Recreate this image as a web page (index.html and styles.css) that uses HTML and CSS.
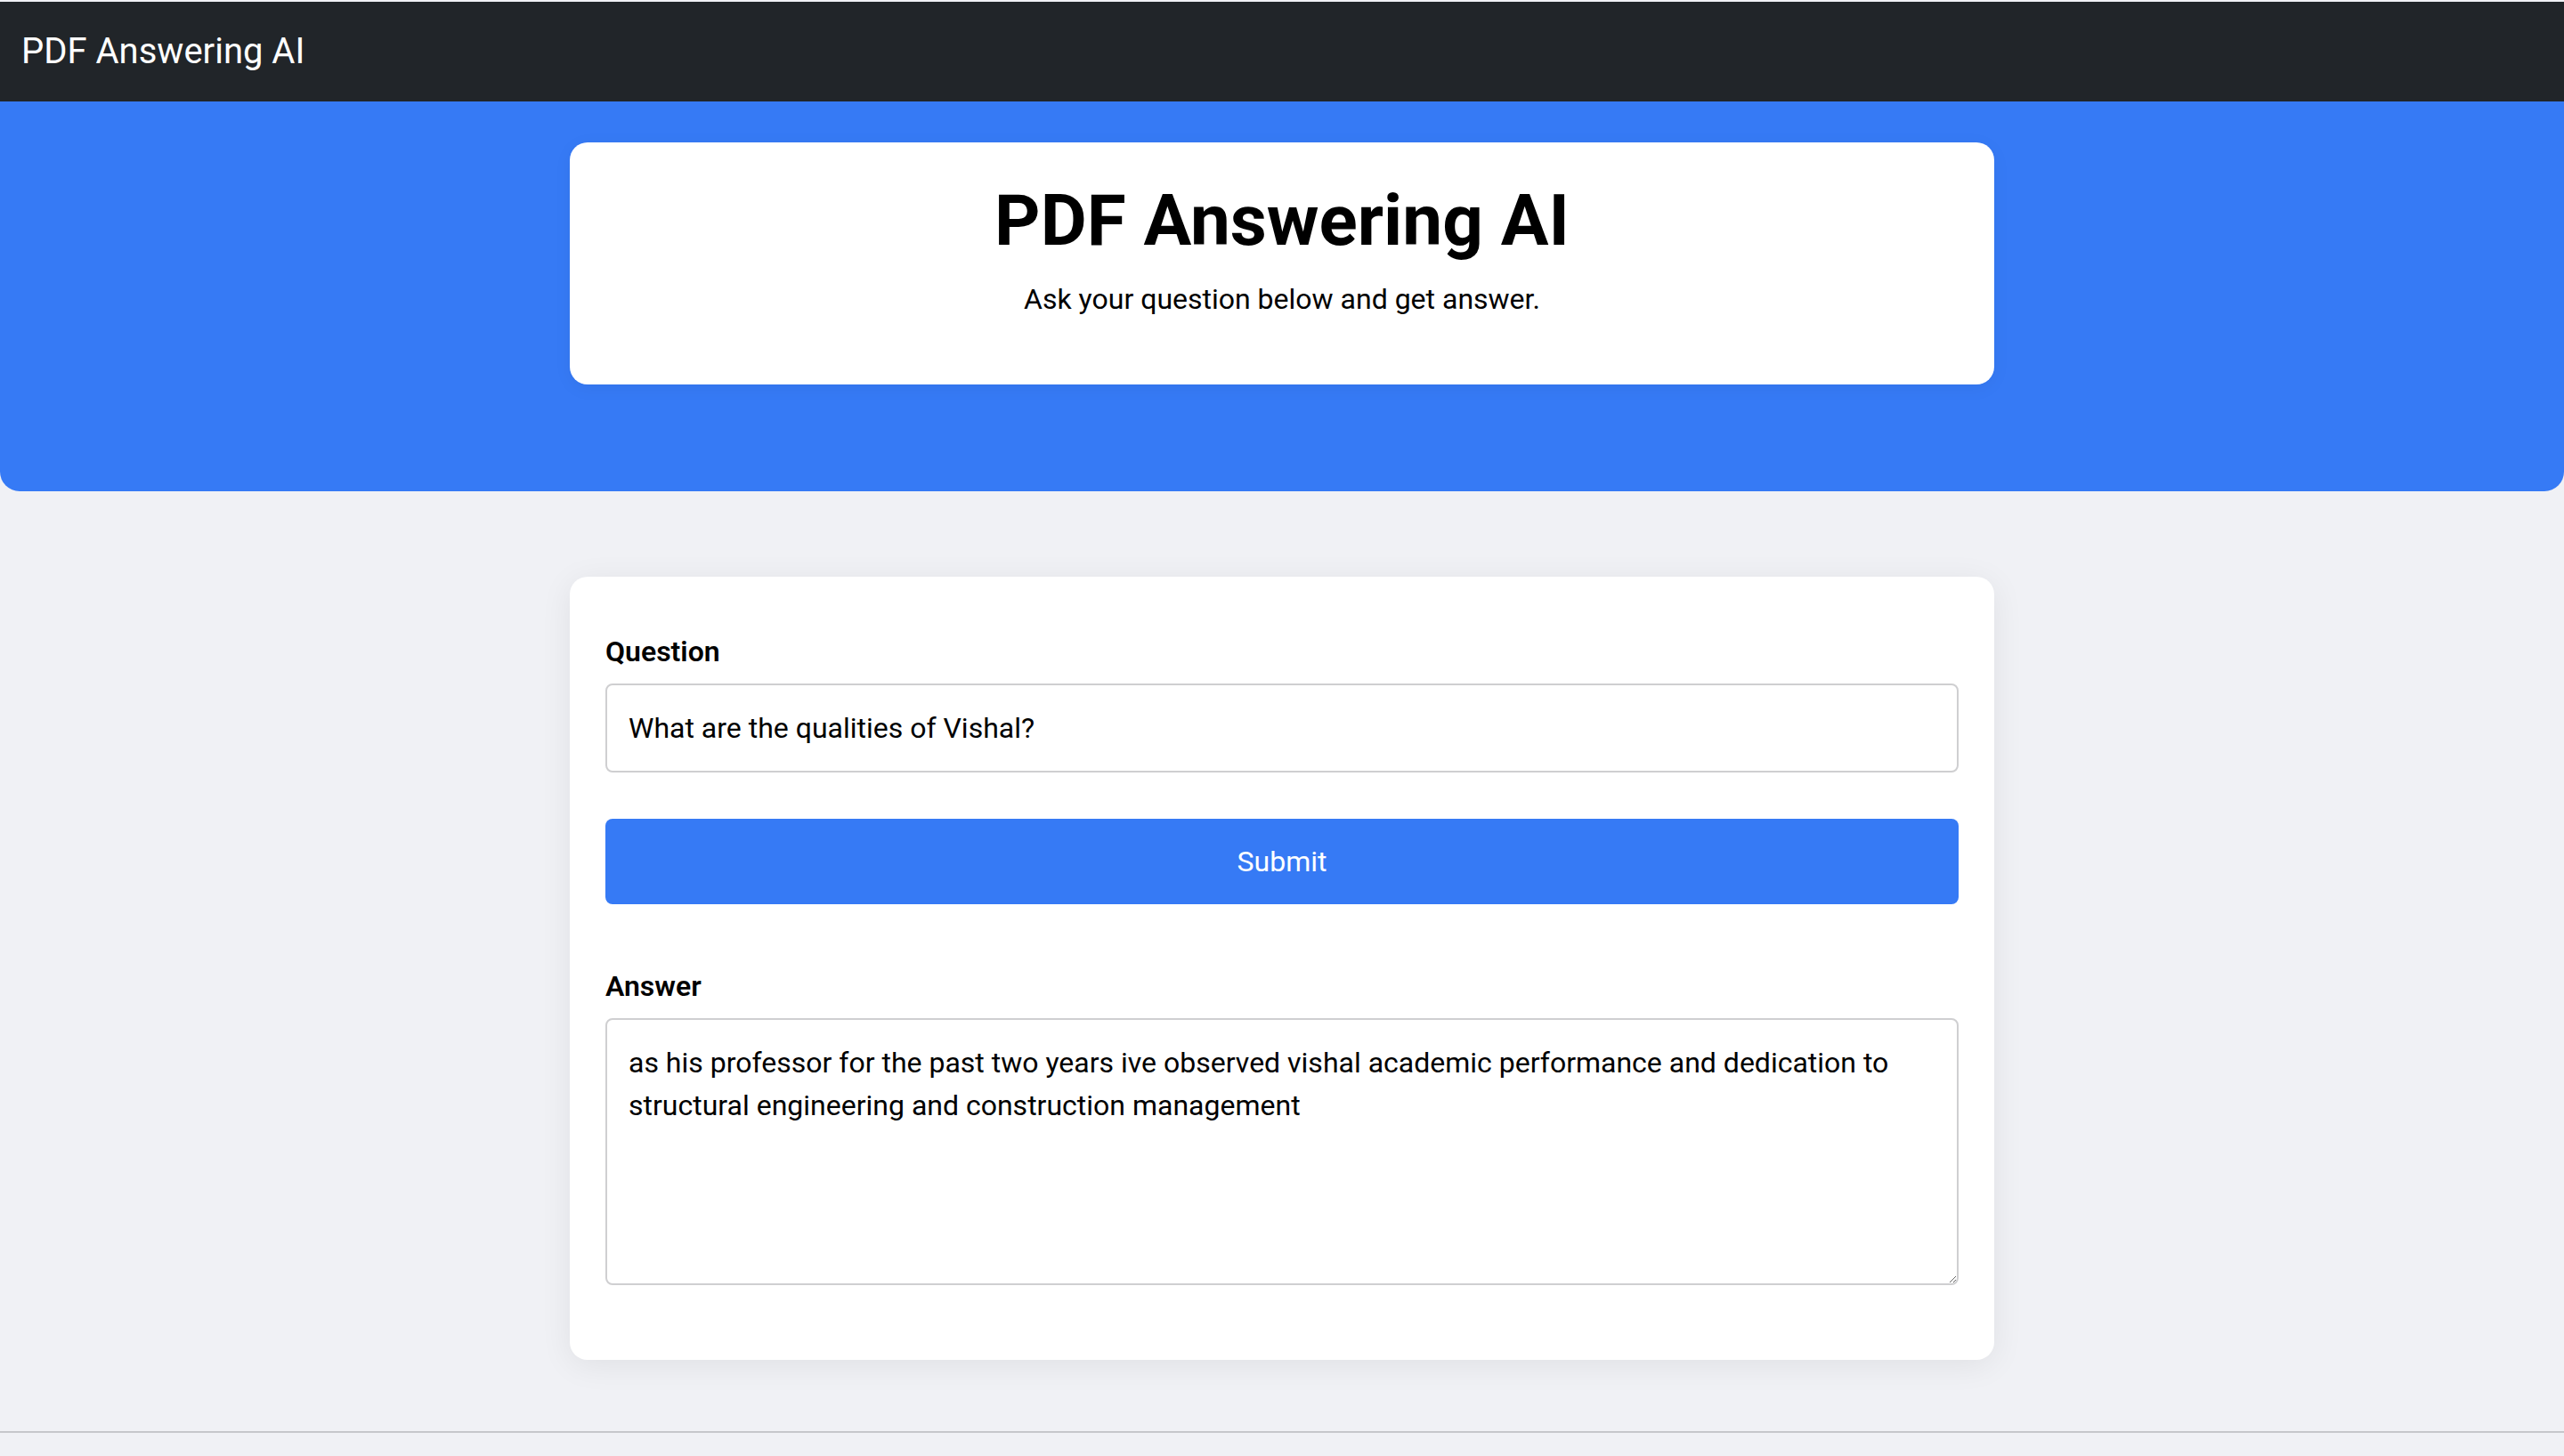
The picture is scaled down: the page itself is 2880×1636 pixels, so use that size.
FILE: index.html
```html
<!DOCTYPE html>
<html lang="en">
<head>
<meta charset="utf-8">
<title>PDF Answering AI</title>
<link rel="stylesheet" href="styles.css">
</head>
<body>
<nav class="navbar">
  <span class="brand">PDF Answering AI</span>
</nav>
<header class="hero">
  <div class="hero-card">
    <h1 class="hero-title">PDF Answering AI</h1>
    <p class="hero-sub">Ask your question below and get answer.</p>
  </div>
</header>
<main class="main">
  <form class="qa-card">
    <label class="field-label" for="q">Question</label>
    <input class="field-input" id="q" type="text" value="What are the qualities of Vishal?">
    <button class="submit-btn" type="button">Submit</button>
    <label class="field-label answer-label" for="a">Answer</label>
    <textarea class="field-input field-area" id="a">as his professor for the past two years ive observed vishal academic performance and dedication to structural engineering and construction management</textarea>
  </form>
</main>
<footer class="footer"></footer>
</body>
</html>
```
FILE: styles.css
```css
* { box-sizing: border-box; }
html, body { margin: 0; }
body {
  padding-top: 2px;
  background: #f0f1f5;
  font-family: Roboto, "Liberation Sans", Arial, sans-serif;
  color: #111;
  font-size: 32px;
  line-height: 1.5;
}
.navbar {
  background: #212529;
  padding: 16px 24px;
  display: flex;
  align-items: center;
}
.brand {
  color: #fff;
  font-size: 40px;
  line-height: 60px;
  padding: 10px 0;
}
.hero {
  background: #367af5;
  border-radius: 0 0 22px 22px;
  padding: 46px 0 120px;
}
.hero-card {
  width: 1600px;
  margin: 0 auto;
  background: #fff;
  border-radius: 20px;
  padding: 40px;
  text-align: center;
  box-shadow: 0 4px 20px rgba(0, 0, 0, 0.05);
}
.hero-title {
  margin: 0 0 16px;
  font-size: 80px;
  line-height: 1.2;
  font-weight: 700;
  color: #000;
}
.hero-sub {
  margin: 0 0 32px;
  font-size: 32px;
  line-height: 1.5;
  color: #000;
}
.main {
  padding-top: 96px;
}
.qa-card {
  width: 1600px;
  margin: 0 auto;
  background: #fff;
  border-radius: 20px;
  padding: 60px 40px 84px;
  box-shadow: 0 6px 36px rgba(0, 0, 0, 0.07);
  display: flex;
  flex-direction: column;
}
.field-label {
  display: block;
  font-size: 32px;
  line-height: 48px;
  font-weight: 600;
  color: #000;
  margin-bottom: 12px;
}
.answer-label {
  margin-top: 68px;
}
.field-input {
  display: block;
  width: 100%;
  font-family: Roboto, "Liberation Sans", Arial, sans-serif;
  font-size: 32px;
  line-height: 48px;
  color: #000;
  padding: 24px;
  border: 2px solid #cfcfd1;
  border-radius: 8px;
  background: #fff;
  outline: none;
}
.field-area {
  height: 300px;
  resize: vertical;
}
.submit-btn {
  margin-top: 52px;
  width: 100%;
  background: #367af5;
  color: #fff;
  border: 0;
  border-radius: 8px;
  padding: 24px;
  font-family: Roboto, "Liberation Sans", Arial, sans-serif;
  font-size: 32px;
  line-height: 48px;
}
.footer {
  margin-top: 80px;
  border-top: 2px solid #c6c7cb;
  height: 40px;
}
```
